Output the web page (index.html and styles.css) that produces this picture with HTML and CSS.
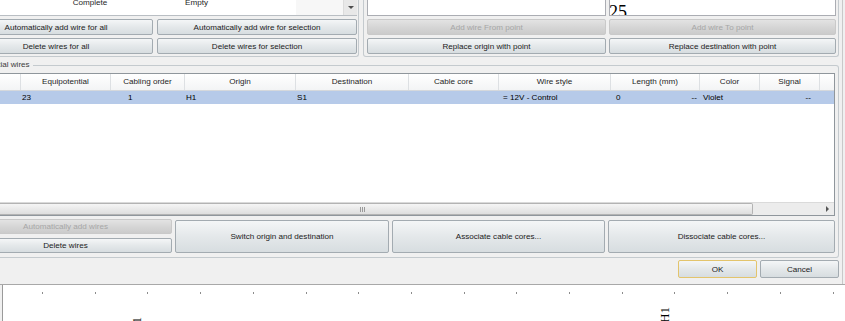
FILE: index.html
```html
<!DOCTYPE html>
<html>
<head>
    <meta charset="UTF-8">
    <title>Potential wires</title>
    <link rel="stylesheet" href="styles.css">
</head>
<body>
<div class="dialog">
    <div class="top">
        <div class="panel panel-left">
            <div class="list">
                <div class="list-rows">
                    <span class="list-a">Complete</span><span class="list-b">Empty</span>
                </div>
                <div class="vscroll"><span class="arrow-down"></span></div>
            </div>
            <div class="btn-grid grid-left">
                <button class="btn">Automatically add wire for all</button>
                <button class="btn">Automatically add wire for selection</button>
                <button class="btn">Delete wires for all</button>
                <button class="btn">Delete wires for selection</button>
            </div>
        </div>
        <div class="panel panel-right">
            <div class="boxes">
                <div class="box box-from"></div>
                <div class="box box-to"><span class="peek">25</span></div>
            </div>
            <div class="btn-grid grid-right">
                <button class="btn" disabled>Add wire From point</button>
                <button class="btn" disabled>Add wire To point</button>
                <button class="btn">Replace origin with point</button>
                <button class="btn">Replace destination with point</button>
            </div>
        </div>
    </div>

    <div class="group">
        <div class="legend">Potential wires</div>
        <div class="grid">
            <div class="grid-head">
                <span class="c0"></span>
                <span class="c1">Equipotential</span>
                <span class="c2">Cabling order</span>
                <span class="c3">Origin</span>
                <span class="c4">Destination</span>
                <span class="c5">Cable core</span>
                <span class="c6">Wire style</span>
                <span class="c7">Length (mm)</span>
                <span class="c8">Color</span>
                <span class="c9">Signal</span>
                <span class="c10"></span>
            </div>
            <div class="grid-row">
                <span class="c0"></span>
                <span class="c1 pad-1">23</span>
                <span class="c2 pad-order">1</span>
                <span class="c3 pad-1">H1</span>
                <span class="c4 pad-1">S1</span>
                <span class="c5"></span>
                <span class="c6 pad-style">= 12V - Control</span>
                <span class="c7 cell-split"><span>0</span><span>--</span></span>
                <span class="c8 pad-color">Violet</span>
                <span class="c9 cell-right">--</span>
                <span class="c10"></span>
            </div>
            <div class="grid-fill"></div>
            <div class="hscroll">
                <div class="thumb"><span class="grip"></span></div>
                <span class="arrow-right"></span>
            </div>
        </div>
        <div class="actions">
            <div class="actions-col">
                <button class="btn btn-small" disabled>Automatically add wires</button>
                <button class="btn btn-small">Delete wires</button>
            </div>
            <button class="btn btn-big b-switch">Switch origin and destination</button>
            <button class="btn btn-big b-assoc">Associate cable cores...</button>
            <button class="btn btn-big b-dissoc">Dissociate cable cores...</button>
        </div>
    </div>

    <div class="footer">
        <button class="btn btn-footer btn-default">OK</button>
        <button class="btn btn-footer">Cancel</button>
    </div>
</div>
<div class="canvas">
    <div class="ticks"></div>
    <span class="node-label label-a">H1</span>
    <span class="node-label label-b">H1</span>
</div>
</body>
</html>
```

FILE: styles.css
```css
* {
    box-sizing: border-box;
}

body {
    margin: 0;
    width: 845px;
    height: 321px;
    overflow: hidden;
    background: #f0f0f0;
    font-family: "Liberation Sans", Arial, sans-serif;
    font-size: 8.1px;
    color: #1e1e1e;
}

/* dialog frame */
.dialog {
    width: 905px;
    height: 285px;
    margin-left: -60px;
    background: #f0f0f0;
    border-bottom: 1px solid #a8a8a8;
    box-shadow: inset -2px 0 0 #f0f0f0, inset -3px 0 0 #c9c9c9;
    overflow: hidden;
}

.top {
    display: flex;
    height: 62px;
    margin-top: -5px;
}

.panel {
    height: 62px;
    border-right: 1px solid #c4cace;
    border-bottom: 1px solid #c4cace;
    border-bottom-right-radius: 3px;
}

.panel-left {
    width: 419px;
    padding: 0 1px 2px 19px;
}

.panel-right {
    width: 476px;
    margin-left: 4px;
    padding: 0 2px 2px 3px;
    border-left: 1px solid #c4cace;
    border-bottom-left-radius: 3px;
}

.list {
    display: flex;
    height: 21px;
    margin-bottom: 3px;
    background: #f7f7f7;
    border-bottom: 1px solid #b9bec3;
}

.list-rows {
    display: flex;
    width: 337px;
    padding: 3px 0 0 35px;
    line-height: 10px;
    white-space: nowrap;
    background: #fff;
}

.list-a {
    width: 192px;
    text-align: center;
}

.list-b {
    margin-left: -1px;
}

.vscroll {
    display: flex;
    justify-content: center;
    width: 14px;
    margin-left: auto;
    padding-top: 11px;
    background: #e8e8e8;
    border-left: 1px solid #dcdcdc;
}

.arrow-down {
    width: 0;
    height: 0;
    border-left: 3px solid transparent;
    border-right: 3px solid transparent;
    border-top: 3px solid #4d4d4d;
}

.boxes {
    display: flex;
    gap: 3px;
    height: 21px;
    margin-bottom: 3px;
}

.box {
    background: #fff;
    border: 1px solid #abadb3;
    overflow: hidden;
}

.box-from {
    width: 239px;
}

.box-to {
    width: 227px;
}

.peek {
    display: block;
    margin: 7px 0 0 -1px;
    font-family: "Liberation Serif", "Times New Roman", serif;
    font-size: 18px;
    line-height: 18px;
    color: #000;
}

/* buttons */
.btn-grid {
    display: grid;
    grid-template-rows: 16px 16px;
    row-gap: 3px;
}

.grid-left {
    grid-template-columns: 194px 200px;
    column-gap: 4px;
}

.grid-right {
    grid-template-columns: 239px 227px;
    column-gap: 3px;
}

.btn {
    margin: 0;
    padding: 0;
    height: 16px;
    font: inherit;
    color: #1b1b1b;
    white-space: nowrap;
    border: 1px solid #a3abb1;
    border-radius: 2px;
    background: linear-gradient(#f4f6f7, #e4e8ea 50%, #d7dde0);
}

.btn:disabled {
    color: #a6a6a6;
    border-color: #c9c9c9;
    background: linear-gradient(#e3e3e3, #d6d6d6 50%, #cbcbcb);
}

/* potential wires group */
.group {
    width: 899px;
    margin-top: 8px;
    padding: 0 3px 4px 50px;
    border-top: 1px solid #c4cace;
    border-right: 1px solid #c4cace;
    border-bottom: 1px solid #c4cace;
    border-top-right-radius: 3px;
    border-bottom-right-radius: 3px;
}

.legend {
    width: fit-content;
    margin: -7px 0 0 -13px;
    padding-right: 3px;
    line-height: 12px;
    background: #f0f0f0;
    color: #3c3c3c;
}

.grid {
    display: flex;
    flex-direction: column;
    width: 845px;
    height: 143px;
    margin-top: 2px;
    background: #fff;
    border: 1px solid #8f969c;
}

.grid-head,
.grid-row {
    display: flex;
    flex-shrink: 0;
    white-space: nowrap;
}

.grid-head span,
.grid-row > span {
    flex-shrink: 0;
}

.grid-head {
    height: 17px;
    line-height: 16px;
    border-bottom: 1px solid #d5d8dc;
    background: linear-gradient(#ffffff, #f3f4f5);
}

.grid-head span {
    text-align: center;
    border-right: 1px solid #dde0e3;
}

.grid-head span:last-child {
    border-right: none;
}

.grid-row {
    height: 13px;
    line-height: 13px;
    background: #b6cae9;
    color: #000;
}

.c0 { width: 30px; }
.c1 { width: 90px; }
.c2 { width: 74px; }
.c3 { width: 111px; }
.c4 { width: 113px; }
.c5 { width: 90px; }
.c6 { width: 112px; }
.c7 { width: 89px; }
.c8 { width: 60px; }
.c9 { width: 60px; }
.grid-head .c10,
.grid-row .c10 { flex: 1; }

.pad-1 { padding-left: 1px; }
.pad-order { padding-left: 17px; }
.pad-style { padding-left: 4px; }
.pad-color { padding-left: 3px; }

.cell-split {
    display: flex;
    justify-content: space-between;
    padding: 0 3px 0 5px;
}

.cell-right {
    text-align: right;
    padding-right: 9px;
}

.grid-fill {
    flex: 1;
}

.hscroll {
    display: flex;
    height: 13px;
    flex-shrink: 0;
    background: #ececec;
    border-top: 1px solid #dadada;
}

.thumb {
    display: flex;
    align-items: center;
    width: 762px;
    padding-left: 369px;
    border: 1px solid #b3b3b3;
    border-left: none;
    border-radius: 0 2px 2px 0;
    background: linear-gradient(#f5f5f5, #dedede);
}

.grip {
    width: 5px;
    height: 5px;
    background: repeating-linear-gradient(90deg, #9a9a9a 0 1px, transparent 1px 2px);
}

.arrow-right {
    width: 0;
    height: 0;
    margin: auto 5px auto auto;
    border-top: 3px solid transparent;
    border-bottom: 3px solid transparent;
    border-left: 3px solid #555;
}

.actions {
    display: flex;
    gap: 3px;
    height: 34px;
    margin: 3px 0 0 -31px;
}

.actions-col {
    display: flex;
    flex-direction: column;
    gap: 4px;
    width: 213px;
}

.btn-small {
    height: 15px;
}

.btn-big {
    height: 33px;
    margin-top: 1px;
}

.b-switch { width: 214px; }
.b-assoc { width: 213px; }
.b-dissoc { width: 227px; }

.footer {
    display: flex;
    justify-content: flex-end;
    gap: 3px;
    margin-top: 2px;
    padding-right: 6px;
}

.btn-footer {
    width: 79px;
    height: 18px;
}

.btn-default {
    border-color: #e3c46c;
}

/* drawing canvas below the dialog */
.canvas {
    position: relative;
    height: 36px;
    margin-left: 2px;
    padding-top: 7px;
    background: #fff;
    border-left: 1px solid #9a9a9a;
    overflow: hidden;
}

.ticks {
    height: 2px;
    background: repeating-linear-gradient(90deg, #8c8c8c 0 1px, transparent 1px 52.7px);
    background-position: 39px 0;
}

.node-label {
    position: absolute;
    font-family: "Liberation Serif", "Times New Roman", serif;
    font-size: 13px;
    line-height: 11px;
    color: #000;
    white-space: nowrap;
    transform-origin: left top;
    transform: rotate(-90deg);
}

.label-a {
    left: 128px;
    top: 48px;
}

.label-b {
    left: 656px;
    top: 38px;
}
```
